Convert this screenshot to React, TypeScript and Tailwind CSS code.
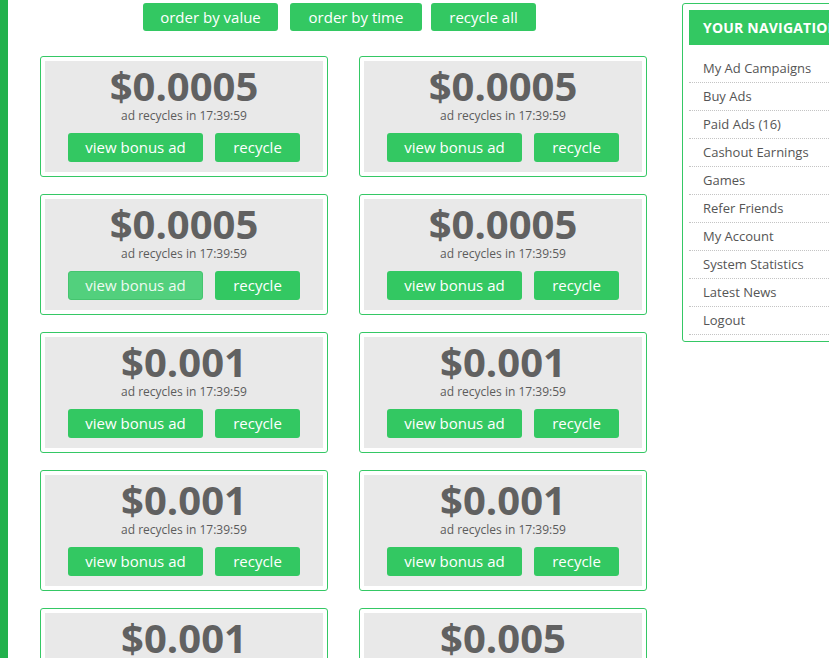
import React from 'react';

const ads = [
  { value: '$0.0005', hover: false },
  { value: '$0.0005', hover: false },
  { value: '$0.0005', hover: true },
  { value: '$0.0005', hover: false },
  { value: '$0.001', hover: false },
  { value: '$0.001', hover: false },
  { value: '$0.001', hover: false },
  { value: '$0.001', hover: false },
  { value: '$0.001', hover: false },
  { value: '$0.005', hover: false },
];

const navItems = [
  'My Ad Campaigns',
  'Buy Ads',
  'Paid Ads (16)',
  'Cashout Earnings',
  'Games',
  'Refer Friends',
  'My Account',
  'System Statistics',
  'Latest News',
  'Logout',
];

function AdCard({ value, hover }: { value: string; hover: boolean }) {
  return (
    <div className="h-[121px] rounded-[3px] border border-[#35c865] bg-white p-[4px]">
      <div className="flex h-full flex-col items-center bg-[#e9e9e9] pt-[4px]">
        <div className="text-[40px] font-bold leading-[41px] text-[#616161]">{value}</div>
        <div className="mt-[2px] text-[12px] leading-4 text-[#5c5c5c]">ad recycles in 17:39:59</div>
        <div className="mt-[9px] flex gap-[12px]">
          {hover ? (
            <button className="h-[29px] w-[135px] rounded-[3px] border border-[#45c56f] bg-[#52d07d] text-[15px] text-[#eefaf1]">
              view bonus ad
            </button>
          ) : (
            <button className="h-[29px] w-[135px] rounded-[3px] bg-[#33c862] text-[15px] text-white">view bonus ad</button>
          )}
          <button className="h-[29px] w-[85px] rounded-[3px] bg-[#33c862] text-[15px] text-white">recycle</button>
        </div>
      </div>
    </div>
  );
}

export default function App() {
  return (
    <div
      className="flex h-[658px] w-[829px] overflow-hidden bg-white"
      style={{ fontFamily: '"Open Sans", "Liberation Sans", sans-serif' }}
    >
      {/* left accent bar */}
      <div className="w-[8px] shrink-0 bg-[#22b14c]" />

      <div className="w-[662px] shrink-0">
        <div className="flex pl-[135px] pt-[3px]">
          <button className="h-[28px] w-[135px] rounded-[3px] bg-[#33c862] text-[15px] text-white">order by value</button>
          <button className="ml-[12px] h-[28px] w-[132px] rounded-[3px] bg-[#33c862] text-[15px] text-white">order by time</button>
          <button className="ml-[9px] h-[28px] w-[105px] rounded-[3px] bg-[#33c862] text-[15px] text-white">recycle all</button>
        </div>

        <div className="mt-[25px] grid grid-cols-[288px_288px] gap-x-[31px] gap-y-[17px] pl-[32px]">
          {ads.map((ad, i) => (
            <AdCard key={i} value={ad.value} hover={ad.hover} />
          ))}
        </div>
      </div>

      {/* sidebar */}
      <div className="ml-[12px] mt-[3px] h-[339px] w-[230px] shrink-0 rounded-[3px] border border-[#35c865] px-[6px] pt-[6px]">
        <div className="flex h-[35px] items-center bg-[#33c862] pl-[14px] text-[14px] font-bold tracking-[0.2px] text-white whitespace-nowrap">
          YOUR NAVIGATION
        </div>
        <ul className="mt-[10px]">
          {navItems.map((item) => (
            <li
              key={item}
              className="flex h-[28px] items-center border-b border-dotted border-[#c4c4c4] pl-[14px] text-[13px] text-[#555]"
            >
              {item}
            </li>
          ))}
        </ul>
      </div>
    </div>
  );
}
